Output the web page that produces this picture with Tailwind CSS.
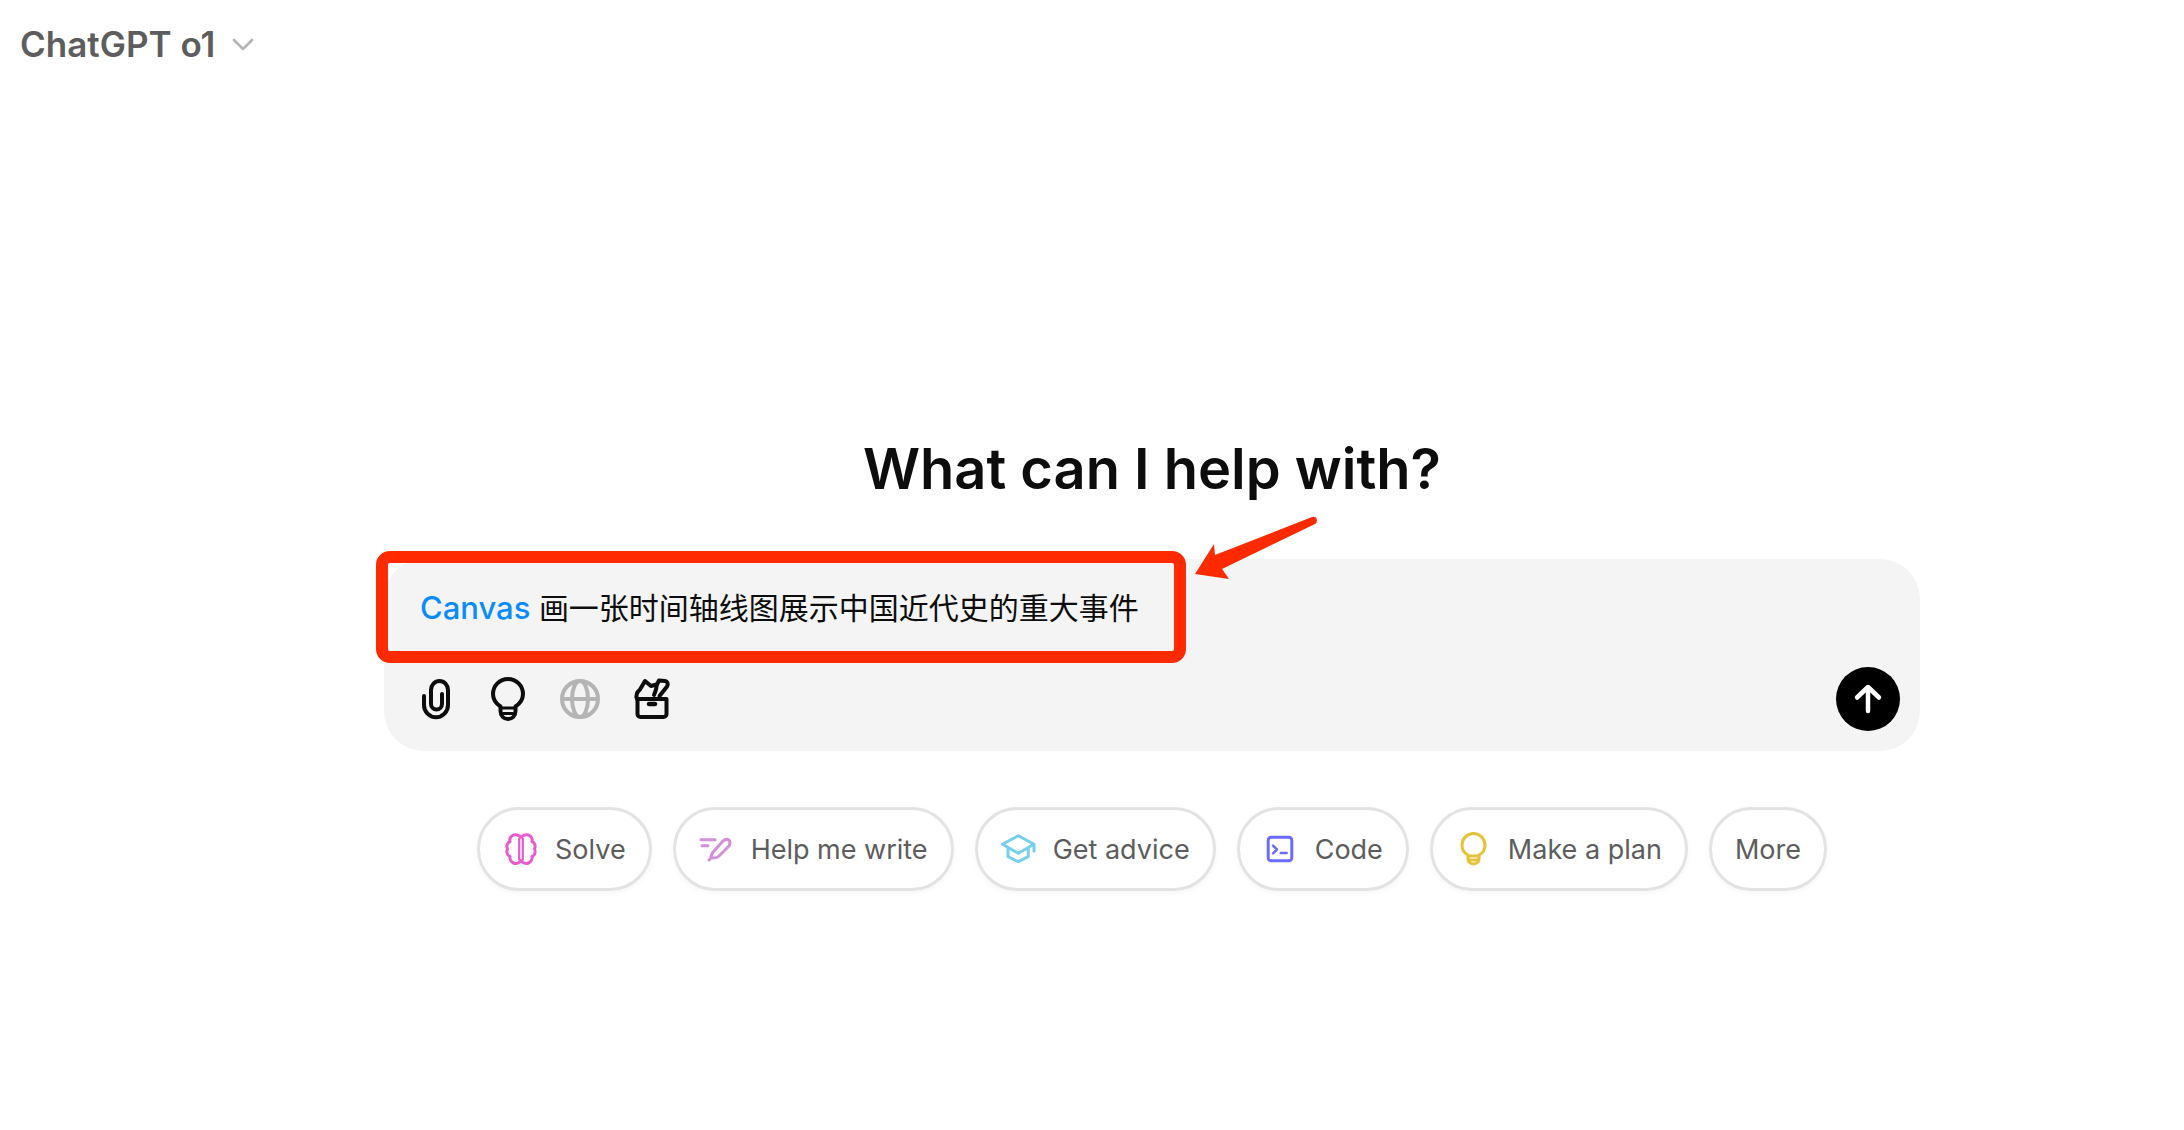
<!DOCTYPE html>
<html lang="en">
<head>
    <meta charset="UTF-8">
    <meta name="viewport" content="width=device-width, initial-scale=1.0">
    <title>ChatGPT o1</title>
    <script src="https://cdn.jsdelivr.net/npm/@tailwindcss/browser@4"></script>
</head>
<body class="bg-white h-[1130px] overflow-hidden font-[Inter,'Noto_Sans_CJK_SC',sans-serif]">
    <!-- Model picker -->
    <header class="h-[88px] pl-[20px] flex items-center gap-[16px]">
        <span class="text-[35px] font-semibold text-[#5d5d5d]">ChatGPT o1</span>
        <svg class="w-[24px] h-[24px] mt-[1px]" viewBox="0 0 24 24" fill="none" stroke="#b4b4b4" stroke-width="2.6" stroke-linecap="round" stroke-linejoin="round"><path d="M3 7l9 9 9-9"/></svg>
    </header>

    <main class="flex flex-col items-center pl-[120px] pt-[347px]">
        <h1 class="h-[68px] leading-[68px] text-[56px] font-semibold text-[#0d0d0d]">What can I help with?</h1>

        <!-- Composer -->
        <div class="relative mt-[56px] w-[1536px] h-[192px] rounded-[40px] bg-[#f4f4f4] flex flex-col">
            <p class="pl-[36px] pt-[27px] leading-[44px] text-[30px] text-[#0d0d0d]"><span class="text-[31px] font-medium text-[#0a8cff]">Canvas</span> 画一张时间轴线图展示中国近代史的重大事件</p>
            <div class="mt-auto pl-[30px] pr-[20px] pb-[20px] flex items-center justify-between">
                <div class="flex items-center gap-[28px]">
                    <svg class="w-[44px] h-[48px]" viewBox="0 0 44 48" fill="none" stroke="#0d0d0d" stroke-width="4" stroke-linecap="round" stroke-linejoin="round"><path d="M10 21v9a12 12.3 0 0 0 24 0V15a8.5 9 0 0 0-17 0v14a5.5 5.5 0 0 0 11 0V19"/></svg>
                    <svg class="w-[44px] h-[48px]" viewBox="0 0 44 48" fill="none" stroke="#0d0d0d" stroke-width="4" stroke-linecap="round" stroke-linejoin="round"><path d="M14.5 31.5C10 28.5 7 24 7 19a15 15 0 0 1 30 0C37 24 34 28.5 29.5 31.5V36C29.5 41 26 44 22 44C18 44 14.5 41 14.5 36Z"/><path d="M15 33H29M17 38.5H27" stroke-width="3"/></svg>
                    <svg class="w-[44px] h-[48px]" viewBox="0 0 44 48" fill="none" stroke="#b4b4b4" stroke-width="4"><circle cx="22" cy="24" r="18"/><ellipse cx="22" cy="24" rx="8" ry="18"/><path d="M4 24H40"/></svg>
                    <svg class="w-[44px] h-[48px]" viewBox="0 0 44 48" fill="none" stroke="#0d0d0d" stroke-width="4" stroke-linecap="round" stroke-linejoin="round"><path d="M7.5 24H36.5V39a3 3 0 0 1-3 3H10.5a3 3 0 0 1-3-3Z"/><path d="M7 24c-1.5-4 0-7 3-9.5l5-8.5 6 5 5.5-1.5c.5 3-1 7-2.500 10.500"/><path d="M29.5 21l7.5-9.5c1.5-2.5.5-5-2-5.5l-6-.5-2 4"/><path d="M19 29h6" stroke-width="4.5"/></svg>
                </div>
                <button class="w-[64px] h-[64px] rounded-full bg-black flex items-center justify-center">
                    <svg class="w-[32px] h-[32px]" viewBox="0 0 32 32" fill="none" stroke="white" stroke-width="4.5" stroke-linecap="round" stroke-linejoin="round"><path d="M16 28V4M5 14.5 16 4l11 10.5"/></svg>
                </button>
            </div>

            <!-- Red annotation over the composer -->
            <div class="absolute left-[-8px] top-[-8px] w-[810px] h-[112px] border-[12px] border-[#ff2a00] rounded-[14px]"></div>
            <svg class="absolute left-[806px] top-[-44px] w-[130px] h-[70px]" viewBox="0 0 130 70" fill="#ff2a00"><path d="M5 59 24 29l1 11L122 2q4-1 5 3 0 3-2 4L32 54l7 10Z"/></svg>
        </div>

        <!-- Suggestion pills -->
        <div class="mt-[56px] flex gap-[21px] text-[27px] text-[#5d5d5d]">
            <button class="h-[84px] px-[23px] flex items-center gap-[16px] rounded-full border-[3px] border-[#e3e3e3] shadow-[0_2px_6px_rgba(0,0,0,0.04)]">
                <svg class="w-[36px] h-[36px]" viewBox="0 0 36 36" fill="none" stroke="#e85bd0" stroke-width="3" stroke-linejoin="round"><path d="M18 6.5C16.5 4 12 3 9.5 4.5C7 6 6.5 8.5 7 10.5C4.5 11.5 3 14.5 4.5 18C3 21.5 4.5 24.5 7 25.5C6.5 28 8 31 10.5 32C13 33 16.5 32 18 29.5C19.5 32 23 33 25.5 32C28 31 29.5 28 29 25.5C31.5 24.5 33 21.5 31.5 18C33 14.5 31.5 11.5 29 10.5C29.5 8.5 29 6 26.5 4.5C24 3 19.5 4 18 6.5Z"/><path d="M16.2 7V29.5M19.8 7V29.5" stroke-width="2.2"/></svg>
                <span class="pt-[2px]">Solve</span>
            </button>
            <button class="h-[84px] px-[23px] flex items-center gap-[16px] rounded-full border-[3px] border-[#e3e3e3] shadow-[0_2px_6px_rgba(0,0,0,0.04)]">
                <svg class="w-[36px] h-[36px]" viewBox="0 0 36 36" fill="none" stroke="#d38fd8" stroke-width="3" stroke-linecap="round" stroke-linejoin="round"><path d="M2 8.7H16M3 14.7H9M10 29l2-2c0-3 1-5 3-7l9-10c2-2 4-2 6-1 2 2 1 4 0 6L21 24c-3 3-5 3-9 3"/></svg>
                <span class="pt-[2px]">Help me write</span>
            </button>
            <button class="h-[84px] px-[23px] flex items-center gap-[16px] rounded-full border-[3px] border-[#e3e3e3] shadow-[0_2px_6px_rgba(0,0,0,0.04)]">
                <svg class="w-[36px] h-[36px]" viewBox="0 0 36 36" fill="none" stroke="#76d0eb" stroke-width="3" stroke-linecap="round" stroke-linejoin="round"><path d="M17.3 4.7 1.5 13.3l15.8 9 15.7-9ZM7 17.3v8.4l10.3 5 10-5V17M33 13.3V20"/></svg>
                <span class="pt-[2px]">Get advice</span>
            </button>
            <button class="h-[84px] px-[23px] flex items-center gap-[16px] rounded-full border-[3px] border-[#e3e3e3] shadow-[0_2px_6px_rgba(0,0,0,0.04)]">
                <svg class="w-[36px] h-[36px]" viewBox="0 0 36 36" fill="none" stroke="#6b6bff" stroke-width="3" stroke-linecap="round" stroke-linejoin="round"><rect x="5.2" y="6.2" width="23.6" height="23.6" rx="3"/><path d="M10 14.7l4 3.8-4 3.8M17.7 22h6" stroke-width="2.5"/></svg>
                <span class="pt-[2px]">Code</span>
            </button>
            <button class="h-[84px] px-[23px] flex items-center gap-[16px] rounded-full border-[3px] border-[#e3e3e3] shadow-[0_2px_6px_rgba(0,0,0,0.04)]">
                <svg class="w-[36px] h-[36px]" viewBox="0 0 36 36" fill="none" stroke="#e6c23a" stroke-width="3" stroke-linecap="round" stroke-linejoin="round"><path d="M12 24C8 22 6 18 6 14a11.5 11.5 0 0 1 23 0c0 4-2 8-6 10v4c0 3-3 5-5.5 5S12 31 12 28Z"/><path d="M12 25H23M14 29H21"/></svg>
                <span class="pt-[2px]">Make a plan</span>
            </button>
            <button class="h-[84px] px-[23px] pt-[2px] flex items-center rounded-full border-[3px] border-[#e3e3e3] shadow-[0_2px_6px_rgba(0,0,0,0.04)]">More</button>
        </div>
    </main>
</body>
</html>
